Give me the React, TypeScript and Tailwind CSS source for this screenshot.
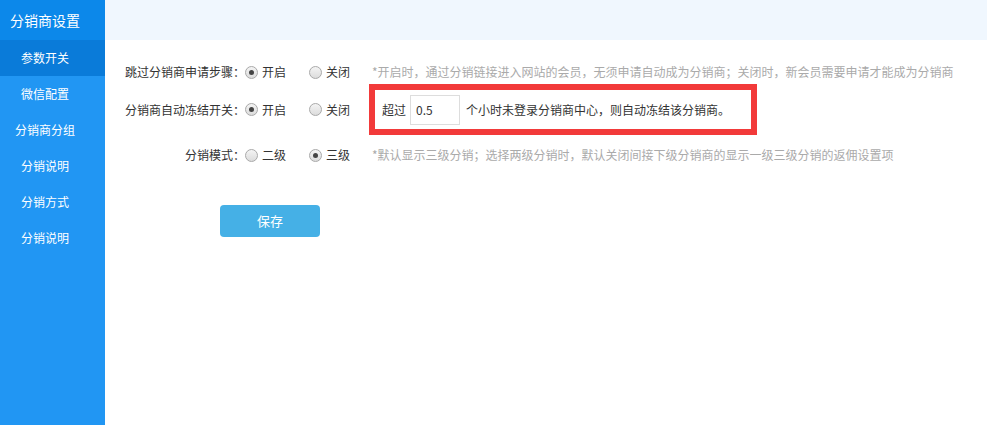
import { useState } from 'react';

const menu = ['参数开关', '微信配置', '分销商分组', '分销说明', '分销方式', '分销说明'];

function Radio({ checked }: { checked: boolean }) {
  return (
    <span className="inline-flex h-[13px] w-[13px] items-center justify-center rounded-full border border-[#a9a9a9] bg-gradient-to-b from-[#f4f4f4] to-[#dcdcdc]">
      {checked && <span className="h-[5px] w-[5px] rounded-full bg-[#444]" />}
    </span>
  );
}

function RadioOption({ label, checked }: { label: string; checked: boolean }) {
  return (
    <span className="flex items-center gap-[4px] w-[64px]">
      <Radio checked={checked} />
      <span>{label}</span>
    </span>
  );
}

export default function App() {
  const [hours, setHours] = useState('0.5');

  return (
    <div
      className="flex h-[425px] w-[987px] bg-white text-[12px] text-[#333]"
      style={{ fontFamily: '"Noto Sans CJK SC", "Noto Sans", sans-serif' }}
    >
      <aside className="flex w-[105px] shrink-0 flex-col bg-[#2196f3] text-white">
        <div className="flex h-[40px] items-center pl-[10px] text-[14px] bg-[#0c88ea]">
          分销商设置
        </div>
        {menu.map((item, i) => (
          <div
            key={i}
            className={`flex h-[36px] items-center justify-center pr-[15px] text-[12px] ${
              i === 0 ? 'bg-[#0a7bd9]' : ''
            }`}
          >
            {item}
          </div>
        ))}
      </aside>

      <main className="flex flex-1 flex-col">
        <div className="h-[40px] bg-[#f0f7fe]" />

        <div className="flex flex-col pt-[21px]">
          <div className="flex h-[22px] items-center">
            <span className="w-[140px] text-right">跳过分销商申请步骤：</span>
            <RadioOption label="开启" checked />
            <RadioOption label="关闭" checked={false} />
            <span className="ml-[-1px] text-[#aaa]">
              *开启时，通过分销链接进入网站的会员，无须申请自动成为分销商；关闭时，新会员需要申请才能成为分销商
            </span>
          </div>

          <div className="mt-[1px] flex h-[51px] items-center">
            <span className="w-[140px] text-right">分销商自动冻结开关：</span>
            <RadioOption label="开启" checked />
            <RadioOption label="关闭" checked={false} />
            <div className="ml-[-4px] flex h-[51px] w-[388px] items-center border-[6px] border-[#f23a3a] pl-[7px]">
              <span>超过</span>
              <input
                value={hours}
                onChange={(e) => setHours(e.target.value)}
                className="ml-[4px] mr-[6px] h-[30px] w-[50px] border border-[#ddd] px-[5px] text-[12px] text-[#333] outline-none"
              />
              <span>个小时未登录分销商中心，则自动冻结该分销商。</span>
            </div>
          </div>

          <div className="mt-[9px] flex h-[22px] items-center">
            <span className="w-[140px] text-right">分销模式：</span>
            <RadioOption label="二级" checked={false} />
            <RadioOption label="三级" checked />
            <span className="ml-[-1px] text-[#aaa]">
              *默认显示三级分销；选择两级分销时，默认关闭间接下级分销商的显示一级三级分销的返佣设置项
            </span>
          </div>

          <div className="mt-[39px] pl-[115px]">
            <button className="h-[32px] w-[100px] rounded-[4px] bg-[#45b0e6] text-[13px] text-white">
              保存
            </button>
          </div>
        </div>
      </main>
    </div>
  );
}
